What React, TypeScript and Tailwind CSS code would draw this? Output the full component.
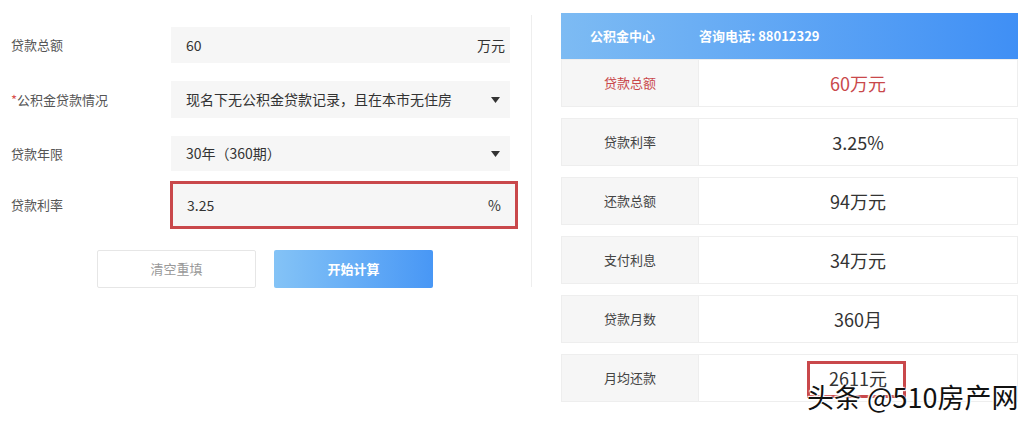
import React from 'react';

const font = { fontFamily: '"Noto Sans CJK SC", "Noto Sans", sans-serif' };

function Caret() {
  return (
    <svg width="9" height="6" viewBox="0 0 9 6" className="shrink-0">
      <path d="M0 0 L9 0 L4.5 6 Z" fill="#333" />
    </svg>
  );
}

function FieldRow({
  label,
  required,
  children,
  className = 'h-[36px]',
}: {
  label: string;
  required?: boolean;
  children: React.ReactNode;
  className?: string;
}) {
  return (
    <div className="flex items-center">
      <div className="w-[160px] pl-[11px] text-[13px] text-[#555]">
        {required && <span className="text-[#d9534f]">*</span>}
        {label}
      </div>
      <div className={`ml-[11px] flex w-[339px] items-center justify-between bg-[#f6f6f6] pl-[15px] pr-[10px] text-[14px] text-[#333] ${className}`}>
        {children}
      </div>
    </div>
  );
}

const results = [
  { label: '贷款总额', value: '60万元', red: true },
  { label: '贷款利率', value: '3.25%' },
  { label: '还款总额', value: '94万元' },
  { label: '支付利息', value: '34万元' },
  { label: '贷款月数', value: '360月' },
  { label: '月均还款', value: '2611元', boxed: true },
];

export default function App() {
  return (
    <div className="relative flex h-[423px] w-[1033px] overflow-hidden bg-white" style={font}>
      {/* left: form */}
      <div className="w-[531px] shrink-0">
        <div className="flex flex-col pt-[27px]">
          <FieldRow label="贷款总额" className="h-[36px] !pr-[5px]">
            <span>60</span>
            <span>万元</span>
          </FieldRow>
          <div className="mt-[18px]">
            <FieldRow label="公积金贷款情况" required className="h-[37px]">
              <span>现名下无公积金贷款记录，且在本市无住房</span>
              <Caret />
            </FieldRow>
          </div>
          <div className="mt-[18px]">
            <FieldRow label="贷款年限" className="h-[35px]">
              <span>30年（360期）</span>
              <Caret />
            </FieldRow>
          </div>
          <div className="mt-[10px] flex items-center">
            <div className="w-[160px] pl-[11px] text-[13px] text-[#555]">贷款利率</div>
            <div className="ml-[10px] flex h-[48px] w-[348px] items-center justify-between border-[3px] border-[#c9484b] bg-[#f6f6f6] pl-[14px] pr-[14px] text-[14px] text-[#333]">
              <span>3.25</span>
              <span>%</span>
            </div>
          </div>
          <div className="mt-[21px] flex gap-[18px] pl-[97px]">
            <button className="h-[38px] w-[159px] rounded-[2px] border border-[#e6e6e6] bg-white text-[13px] text-[#999]">
              清空重填
            </button>
            <button className="h-[38px] w-[159px] rounded-[2px] bg-gradient-to-r from-[#84c3f6] to-[#4897f5] text-[13px] font-bold text-white">
              开始计算
            </button>
          </div>
        </div>
      </div>

      {/* divider */}
      <div className="mt-[15px] h-[272px] w-px shrink-0 bg-[#eeeeee]" />

      {/* right: results */}
      <div className="ml-[29px] w-[457px] shrink-0 pt-[13px]">
        <div className="flex h-[46px] items-center bg-gradient-to-r from-[#7dbbf3] to-[#3f8ff5] text-[13px] font-bold text-white">
          <span className="w-[138px] pl-[29px]">公积金中心</span>
          <span>咨询电话: 88012329</span>
        </div>
        <div className="flex flex-col gap-[11px]">
          {results.map((r) => (
            <div key={r.label} className="flex h-[48px] border border-[#eeeeee]">
              <div
                className={`flex w-[136px] items-center justify-center bg-[#f6f6f6] text-[13px] ${
                  r.red ? 'text-[#c9484b]' : 'text-[#444]'
                }`}
              >
                {r.label}
              </div>
              <div className="flex flex-1 items-center justify-center border-l border-[#eeeeee] text-[18px]">
                {r.boxed ? (
                  <span className="relative text-[#333]">
                    {r.value}
                    <span className="absolute left-[-22px] top-[-4px] h-[37px] w-[99px] border-[3px] border-[#c9484b]" />
                  </span>
                ) : (
                  <span className={r.red ? 'text-[#c9484b]' : 'text-[#333]'}>{r.value}</span>
                )}
              </div>
            </div>
          ))}
        </div>
      </div>

      {/* watermark */}
      <div
        className="absolute left-[807px] top-[381px] text-[27px] leading-[32px] text-[#111]"
        style={{ textShadow: '0 0 2px #fff, 0 0 2px #fff, 1px 1px 1px #fff, -1px -1px 1px #fff' }}
      >
        头条 @510房产网
      </div>
    </div>
  );
}
